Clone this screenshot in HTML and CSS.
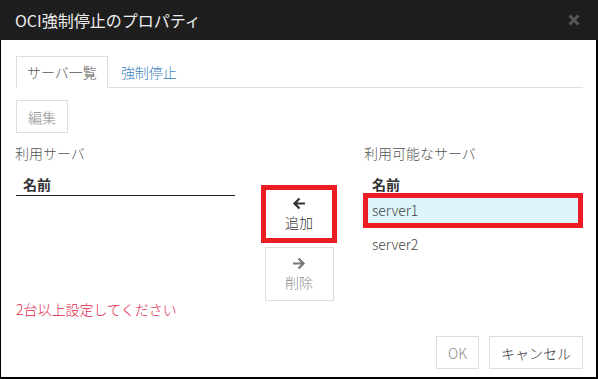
FILE: index.html
```html
<!DOCTYPE html>
<html lang="ja">
<head>
    <meta charset="UTF-8">
    <title>OCI強制停止のプロパティ</title>
    <link rel="stylesheet" href="styles.css">
</head>
<body>
    <div class="dialog">
        <div class="dialog-header">
            <span class="dialog-title">OCI強制停止のプロパティ</span>
            <svg class="close" width="12" height="12" viewBox="0 0 12 12">
                <path d="M1.5 1.5L10.5 10.5M10.5 1.5L1.5 10.5" stroke="#555" stroke-width="3" fill="none"/>
            </svg>
        </div>

        <div class="dialog-body">
            <div class="tabs">
                <span class="tab active">サーバ一覧</span>
                <span class="tab">強制停止</span>
            </div>

            <div class="toolbar">
                <button class="btn disabled">編集</button>
            </div>

            <div class="columns">
                <div class="list-col left">
                    <div class="col-label">利用サーバ</div>
                    <div class="list-head">名前</div>
                </div>

                <div class="move-col">
                    <button class="move-btn add">
                        <svg width="14" height="13" viewBox="0 0 14 13">
                            <path d="M13 6.5H2.5M7.5 1.5L2.5 6.5l5 5" stroke="#333" stroke-width="2.2" fill="none"/>
                        </svg>
                        <span>追加</span>
                    </button>
                    <button class="move-btn remove">
                        <svg width="14" height="13" viewBox="0 0 14 13">
                            <path d="M1 6.5h10.5M6.5 1.5l5 5-5 5" stroke="#777" stroke-width="2.2" fill="none"/>
                        </svg>
                        <span>削除</span>
                    </button>
                </div>

                <div class="list-col right">
                    <div class="col-label">利用可能なサーバ</div>
                    <div class="list-head">名前</div>
                    <div class="list-row selected">server1</div>
                    <div class="list-row">server2</div>
                </div>
            </div>

            <div class="error-text">2台以上設定してください</div>

            <div class="footer">
                <button class="btn disabled">OK</button>
                <button class="btn">キャンセル</button>
            </div>
        </div>
    </div>
</body>
</html>
```

FILE: styles.css
```css
body {
    margin: 0;
    font-family: "Noto Sans CJK JP", "Noto Sans", sans-serif;
    font-size: 14px;
    font-weight: 300;
    color: #333;
    background-color: #fff;
}
.dialog {
    width: 598px;
    height: 379px;
    display: flex;
    flex-direction: column;
}
.dialog-header {
    height: 40px;
    flex-shrink: 0;
    background-color: #1e1e1e;
    color: #eee;
    display: flex;
    align-items: center;
    justify-content: space-between;
    padding: 0 18px 0 15px;
}
.dialog-title {
    font-size: 16px;
    line-height: 20px;
    font-weight: 400;
}
.dialog-body {
    flex: 1;
    display: flex;
    flex-direction: column;
    border-left: 1px solid #000;
    border-right: 2px solid #000;
    border-bottom: 2px solid #000;
    padding: 16px 13px 8px 15px;
}
.tabs {
    display: flex;
    height: 31px;
    border-bottom: 1px solid #ddd;
}
.tab {
    height: 31px;
    box-sizing: border-box;
    line-height: 30px;
    padding: 0 10px;
    margin-right: 2px;
    color: #3a7fc1;
    border: 1px solid transparent;
}
.tab.active {
    color: #555;
    border-color: #ddd;
    border-bottom-color: #fff;
    height: 32px;
    margin-bottom: -1px;
    background-color: #fff;
}
.toolbar {
    margin-top: 12px;
}
.btn {
    height: 33px;
    padding: 0 11px;
    border: 1px solid #ddd;
    background-color: #fff;
    font-family: inherit;
    font-size: 14px;
    font-weight: 300;
    color: #333;
}
.btn.disabled {
    color: #8a8a8a;
}
.columns {
    display: flex;
    margin-top: 10px;
}
.list-col.left {
    width: 219px;
}
.list-col.right {
    width: 220px;
}
.col-label {
    color: #555;
    line-height: 20px;
    margin-bottom: 8px;
}
.left .col-label {
    margin-left: -1px;
}
.right .col-label {
    margin-left: 1px;
}
.list-head {
    font-weight: bold;
    line-height: 20px;
    padding: 3px 0 1px 7px;
    border-bottom: 1px solid #222;
}
.right .list-head {
    padding-left: 9px;
    border-bottom: none;
}
.list-row {
    height: 32px;
    line-height: 32px;
    padding-left: 9px;
    color: #444;
}
.list-row.selected {
    margin-top: -2px;
    height: 25px;
    line-height: 25px;
    padding-left: 4px;
    border: 5px solid #ed1c24;
    background-color: #ddf5fb;
}
.move-col {
    width: 128px;
    display: flex;
    flex-direction: column;
    align-items: center;
    padding-top: 42px;
}
.move-btn {
    width: 69px;
    height: 54px;
    border: 1px solid #ddd;
    background-color: #fff;
    font-family: inherit;
    font-size: 14px;
    font-weight: 300;
    display: flex;
    flex-direction: column;
    align-items: center;
    padding: 9px 0 0;
    gap: 2px;
    color: #8a8a8a;
}
.move-btn span {
    line-height: 20px;
}
.move-btn.add {
    width: 76px;
    height: 58px;
    border: 5px solid #ed1c24;
    padding-top: 7px;
    color: #333;
}
.move-btn.remove {
    margin-top: 4px;
}
.error-text {
    color: #e2264d;
    line-height: 16px;
}
.footer {
    margin-top: auto;
    display: flex;
    justify-content: flex-end;
    gap: 10px;
}
```
